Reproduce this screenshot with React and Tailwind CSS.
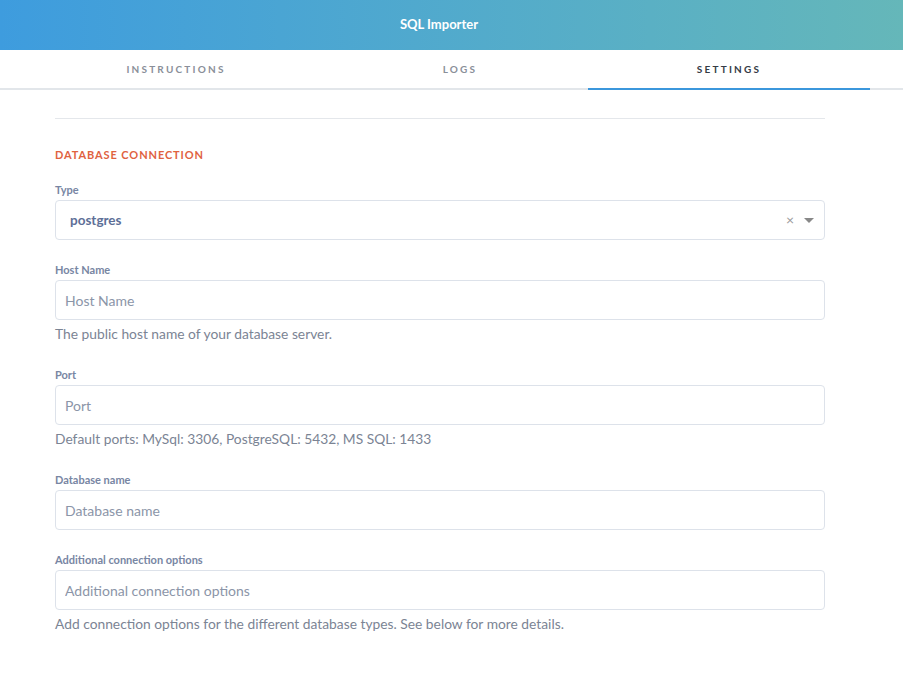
import React from "react";

const font = { fontFamily: "Lato, 'Liberation Sans', sans-serif" };

const Field = ({ label, placeholder, help }) => (
  <div className="flex flex-col">
    <label className="text-[11px] font-bold text-[#7886a3] leading-[14px] mb-[3px]">{label}</label>
    <input
      placeholder={placeholder}
      className="h-[40px] w-full rounded-[4px] border border-[#dde2ea] bg-white px-[9px] text-[14px] text-[#5a6477] placeholder:text-[#8b95a8] outline-none"
    />
    {help ? (
      <p className="mt-[4px] mb-[2px] text-[13.8px] leading-[19px] text-[#7b8494]">{help}</p>
    ) : null}
  </div>
);

const App = () => {
  return (
    <div className="min-h-[673px] w-full bg-white" style={font}>
      {/* header */}
      <div className="h-[50px] w-full bg-gradient-to-r from-[#3e9cde] to-[#65b7b9]">
        <div className="flex h-full w-[878px] items-center justify-center">
          <span className="text-[13px] font-bold text-white">SQL Importer</span>
        </div>
      </div>

      {/* tabs */}
      <div className="flex h-[40px] w-full border-b-2 border-[#e2e6ea]">
        <div className="flex w-[352px] items-center justify-center text-[10px] font-bold tracking-[2.2px] text-[#8a8f99]">
          INSTRUCTIONS
        </div>
        <div className="flex w-[216px] items-center justify-center text-[10px] font-bold tracking-[2.2px] text-[#8a8f99]">
          LOGS
        </div>
        <div className="ml-[20px] -mb-[2px] flex w-[282px] items-center justify-center border-b-2 border-[#3b97dc] text-[10px] font-bold tracking-[2.2px] text-[#353b46]">
          SETTINGS
        </div>
      </div>

      {/* settings */}
      <div className="w-[770px] ml-[55px] pt-[28px]">
        <div className="border-t border-[#e4e7eb]" />
        <h3 className="mt-[29px] text-[11px] font-bold tracking-[0.9px] text-[#e0623f] leading-[14px]">
          DATABASE CONNECTION
        </h3>

        <div className="mt-[21px] flex flex-col">
          <label className="text-[11px] font-bold text-[#7886a3] leading-[14px] mb-[3px]">Type</label>
          <div className="flex h-[40px] w-full items-center rounded-[4px] border border-[#dde2ea] bg-white pl-[14px] pr-[10px]">
            <span className="flex-1 text-[13.5px] font-bold text-[#5d6f97]">postgres</span>
            <span className="mr-[10px] text-[14px] leading-none text-[#9a9a9a]">×</span>
            <span className="h-0 w-0 border-x-[5px] border-t-[5px] border-x-transparent border-t-[#888]" />
          </div>
        </div>

        <div className="mt-[23px] flex flex-col gap-[23px]">
          <Field label="Host Name" placeholder="Host Name" help="The public host name of your database server." />
          <Field label="Port" placeholder="Port" help="Default ports: MySql: 3306, PostgreSQL: 5432, MS SQL: 1433" />
          <Field label="Database name" placeholder="Database name" />
          <Field
            label="Additional connection options"
            placeholder="Additional connection options"
            help="Add connection options for the different database types. See below for more details."
          />
        </div>
      </div>
    </div>
  );
};

export default App;
